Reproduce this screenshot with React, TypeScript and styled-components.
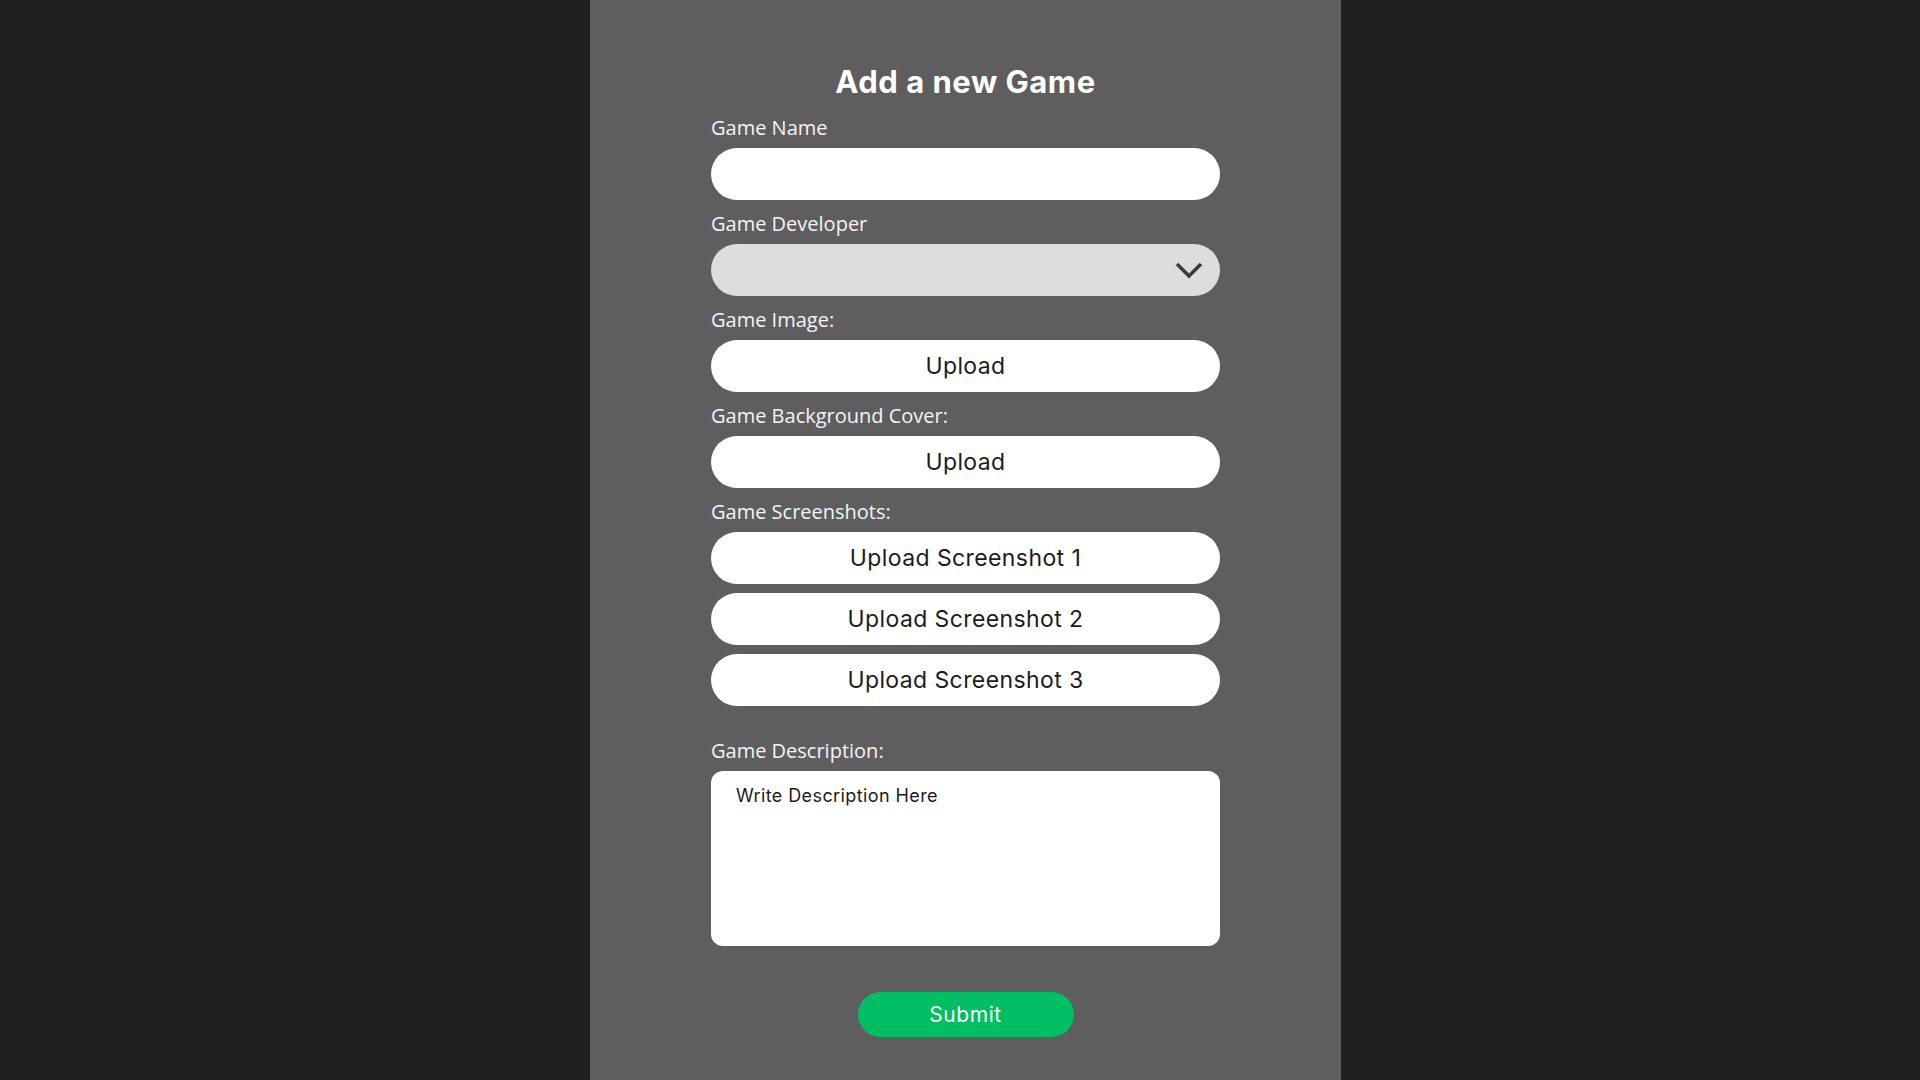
import React from 'react'
import styled, { createGlobalStyle } from 'styled-components'

const GlobalStyle = createGlobalStyle`
  html, body {
    margin: 0;
    padding: 0;
    background-color: #1f1f1f;
  }
  * {
    box-sizing: border-box;
  }
`

const Panel = styled.main`
  width: 751px;
  min-height: 100vh;
  margin-left: 590px;
  background-color: #5e5e5e;
  display: flex;
  flex-direction: column;
  align-items: center;
  padding-top: 65px;
`

const Title = styled.h1`
  margin: 0 0 17px;
  font-family: Inter, "Liberation Sans", sans-serif;
  font-weight: 700;
  font-size: 31px;
  line-height: 34px;
  letter-spacing: 0.5px;
  color: #ffffff;
`

const Form = styled.form`
  width: 509px;
  display: flex;
  flex-direction: column;
  gap: 12px;
`

const Field = styled.div<{ $spaced?: boolean }>`
  display: flex;
  flex-direction: column;
  gap: 8px;
  margin-top: ${({ $spaced }) => ($spaced ? '21px' : '0')};
`

const Label = styled.label`
  font-family: "Open Sans", "Noto Sans", sans-serif;
  font-size: 20px;
  line-height: 24px;
  color: #f4f4f4;
`

const TextInput = styled.input`
  height: 52px;
  border: none;
  border-radius: 26px;
  background-color: #ffffff;
  padding: 0 24px;
  font-family: Inter, sans-serif;
  font-size: 18px;
  outline: none;
`

const Select = styled.div`
  height: 52px;
  border-radius: 26px;
  background-color: #dddddd;
  display: flex;
  align-items: center;
  justify-content: flex-end;
  padding-right: 17px;
  color: #3b3b3b;
`

const UploadButton = styled.button`
  height: 52px;
  border: none;
  border-radius: 26px;
  background-color: #ffffff;
  font-family: Inter, "Liberation Sans", sans-serif;
  font-size: 23px;
  font-weight: 400;
  letter-spacing: 0.4px;
  color: #1c1c1c;
  cursor: pointer;
`

const Stack = styled.div`
  display: flex;
  flex-direction: column;
  gap: 9px;
`

const Description = styled.textarea`
  height: 175px;
  border: none;
  border-radius: 12px;
  background-color: #ffffff;
  padding: 14px 25px;
  resize: none;
  outline: none;
  font-family: Inter, "Liberation Sans", sans-serif;
  font-size: 18px;
  line-height: 22px;
  letter-spacing: 0.4px;
  color: #1c1c1c;
  &::placeholder {
    color: #1c1c1c;
    opacity: 1;
  }
`

const Submit = styled.button`
  margin-top: 34px;
  align-self: center;
  width: 216px;
  height: 45px;
  border: none;
  border-radius: 23px;
  background-color: #00bf63;
  color: #ffffff;
  font-family: Inter, "Liberation Sans", sans-serif;
  font-size: 21px;
  letter-spacing: 0.6px;
  cursor: pointer;
`

const Chevron = () => (
  <svg width="28" height="18" viewBox="0 0 28 18" fill="none">
    <polyline
      points="2,3 14,15 26,3"
      stroke="currentColor"
      strokeWidth="3.6"
      strokeLinecap="butt"
      strokeLinejoin="miter"
    />
  </svg>
)

const App: React.FC = () => {
  return (
    <>
      <GlobalStyle />
      <Panel>
        <Title>Add a new Game</Title>
        <Form onSubmit={ e => e.preventDefault() }>
          <Field>
            <Label>Game Name</Label>
            <TextInput type="text" />
          </Field>
          <Field>
            <Label>Game Developer</Label>
            <Select>
              <Chevron />
            </Select>
          </Field>
          <Field>
            <Label>Game Image:</Label>
            <UploadButton type="button">Upload</UploadButton>
          </Field>
          <Field>
            <Label>Game Background Cover:</Label>
            <UploadButton type="button">Upload</UploadButton>
          </Field>
          <Field>
            <Label>Game Screenshots:</Label>
            <Stack>
              {
                [1, 2, 3].map(n => (
                  <UploadButton key={ n } type="button">Upload Screenshot { n }</UploadButton>
                ))
              }
            </Stack>
          </Field>
          <Field $spaced>
            <Label>Game Description:</Label>
            <Description placeholder="Write Description Here" />
          </Field>
          <Submit type="submit">Submit</Submit>
        </Form>
      </Panel>
    </>
  )
}

export default App
